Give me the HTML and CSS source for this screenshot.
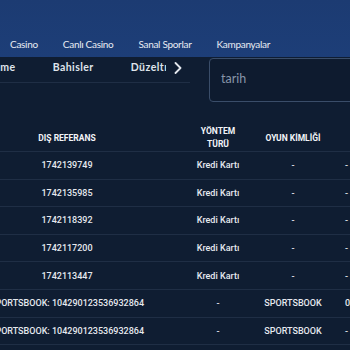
FILE: index.html
```html
<!DOCTYPE html>
<html lang="tr">
<head>
    <meta charset="UTF-8" />
    <meta name="viewport" content="width=device-width, initial-scale=1.0" />
    <title>Hesap Hareketleri</title>
    <link rel="stylesheet" href="styles.css">
</head>
<body>
    <header class="topbar">
        <nav class="main-nav">
            <a href="#" class="nav-link">Casino</a>
            <a href="#" class="nav-link">Canlı Casino</a>
            <a href="#" class="nav-link">Sanal Sporlar</a>
            <a href="#" class="nav-link">Kampanyalar</a>
        </nav>
    </header>

    <div class="subbar">
        <div class="tabs">
            <div class="tabs-clip">
                <div class="tabs-track">
                    <a href="#" class="tab">Ödeme</a>
                    <a href="#" class="tab">Bahisler</a>
                    <a href="#" class="tab">Düzeltı</a>
                </div>
            </div>
            <button class="tabs-next" aria-label="ileri">
                <svg width="8" height="12" viewBox="0 0 8 12"><path d="M1.5 1 L6.5 6 L1.5 11" fill="none" stroke="#e3e7ee" stroke-width="1.8" stroke-linecap="round" stroke-linejoin="round"/></svg>
            </button>
        </div>
        <input class="date-input" type="text" placeholder="tarih">
    </div>

    <div class="table-wrap">
        <table class="history">
            <colgroup>
                <col class="c-ref">
                <col class="c-method">
                <col class="c-game">
                <col class="c-extra">
            </colgroup>
            <thead>
                <tr>
                    <th>Dış Referans</th>
                    <th>Yöntem<br>Türü</th>
                    <th>Oyun Kimliği</th>
                    <th></th>
                </tr>
            </thead>
            <tbody id="rows"></tbody>
        </table>
    </div>

    <script>
        const rows = [
            ['1742139749', 'Kredi Kartı', '-', '-'],
            ['1742135985', 'Kredi Kartı', '-', '-'],
            ['1742118392', 'Kredi Kartı', '-', '-'],
            ['1742117200', 'Kredi Kartı', '-', '-'],
            ['1742113447', 'Kredi Kartı', '-', '-'],
            ['SPORTSBOOK: 104290123536932864', '-', 'SPORTSBOOK', '0'],
            ['SPORTSBOOK: 104290123536932864', '-', 'SPORTSBOOK', '-']
        ];

        document.getElementById('rows').innerHTML = rows.map(r =>
            `<tr>${r.map(v => `<td>${v}</td>`).join('')}</tr>`
        ).join('');
    </script>
</body>
</html>
```

FILE: styles.css
```css
body {
    margin: 0;
    padding: 0;
    background: #0f1d32;
    color: #e6e9ef;
    font-family: Lato, 'Open Sans', sans-serif;
    overflow: hidden;
}

.topbar {
    height: 57px;
    background: linear-gradient(180deg, #1c3b72 0%, #1d3e78 100%);
    display: flex;
    align-items: flex-end;
}

.main-nav {
    display: flex;
    gap: 25px;
    padding: 0 0 7px 10px;
}

.nav-link {
    color: #e8ecf3;
    font-size: 10px;
    text-decoration: none;
    letter-spacing: -0.3px;
}

.subbar {
    display: flex;
    align-items: flex-start;
    gap: 19px;
    height: 63px;
}

.tabs {
    flex-shrink: 0;
    box-sizing: border-box;
    width: 190px;
    height: 26px;
    padding-top: 4px;
    border-bottom: 1px solid #1f2e45;
    display: flex;
    align-items: flex-start;
}

.tabs-clip {
    width: 166px;
    overflow: hidden;
}

.tabs-track {
    display: flex;
    gap: 37px;
    margin-left: -21px;
    white-space: nowrap;
}

.tab {
    color: #dfe4eb;
    font-size: 10.5px;
    font-weight: 700;
    letter-spacing: 0.45px;
    text-decoration: none;
}

.tabs-next {
    margin: 1px 0 0 8px;
    padding: 0;
    border: none;
    background: none;
    display: flex;
}

.date-input {
    flex-shrink: 0;
    box-sizing: border-box;
    width: 160px;
    height: 44px;
    margin-top: 1px;
    padding: 0 11px 4px;
    background: #0e1b2f;
    border: 1px solid #3a4d69;
    border-radius: 4px;
    color: #e6e9ef;
    font-family: Lato, sans-serif;
    font-size: 12.5px;
    outline: none;
}

.date-input::placeholder {
    color: #8796aa;
}

.table-wrap {
    overflow: hidden;
}

.history {
    margin-left: -49px;
    border-collapse: collapse;
    table-layout: fixed;
    width: 480px;
    font-family: Roboto, 'Noto Sans', sans-serif;
}

.c-ref { width: 232px; }
.c-method { width: 70px; }
.c-game { width: 80px; }
.c-extra { width: 98px; }

.history th {
    height: 26px;
    padding: 5px 0 0;
    font-size: 8.5px;
    font-weight: 700;
    text-transform: uppercase;
    line-height: 13px;
    color: #f2f4f8;
    text-align: center;
    border-bottom: 1px solid #1f2e45;
}

.history th:last-child,
.history td:last-child {
    text-align: left;
    padding-left: 12px;
}

.history td {
    height: 26.6px;
    padding: 0;
    font-size: 9px;
    line-height: 12px;
    font-weight: 500;
    color: #e6e9ef;
    text-align: center;
    white-space: nowrap;
    border-bottom: 1px solid #1f2e45;
}
```
